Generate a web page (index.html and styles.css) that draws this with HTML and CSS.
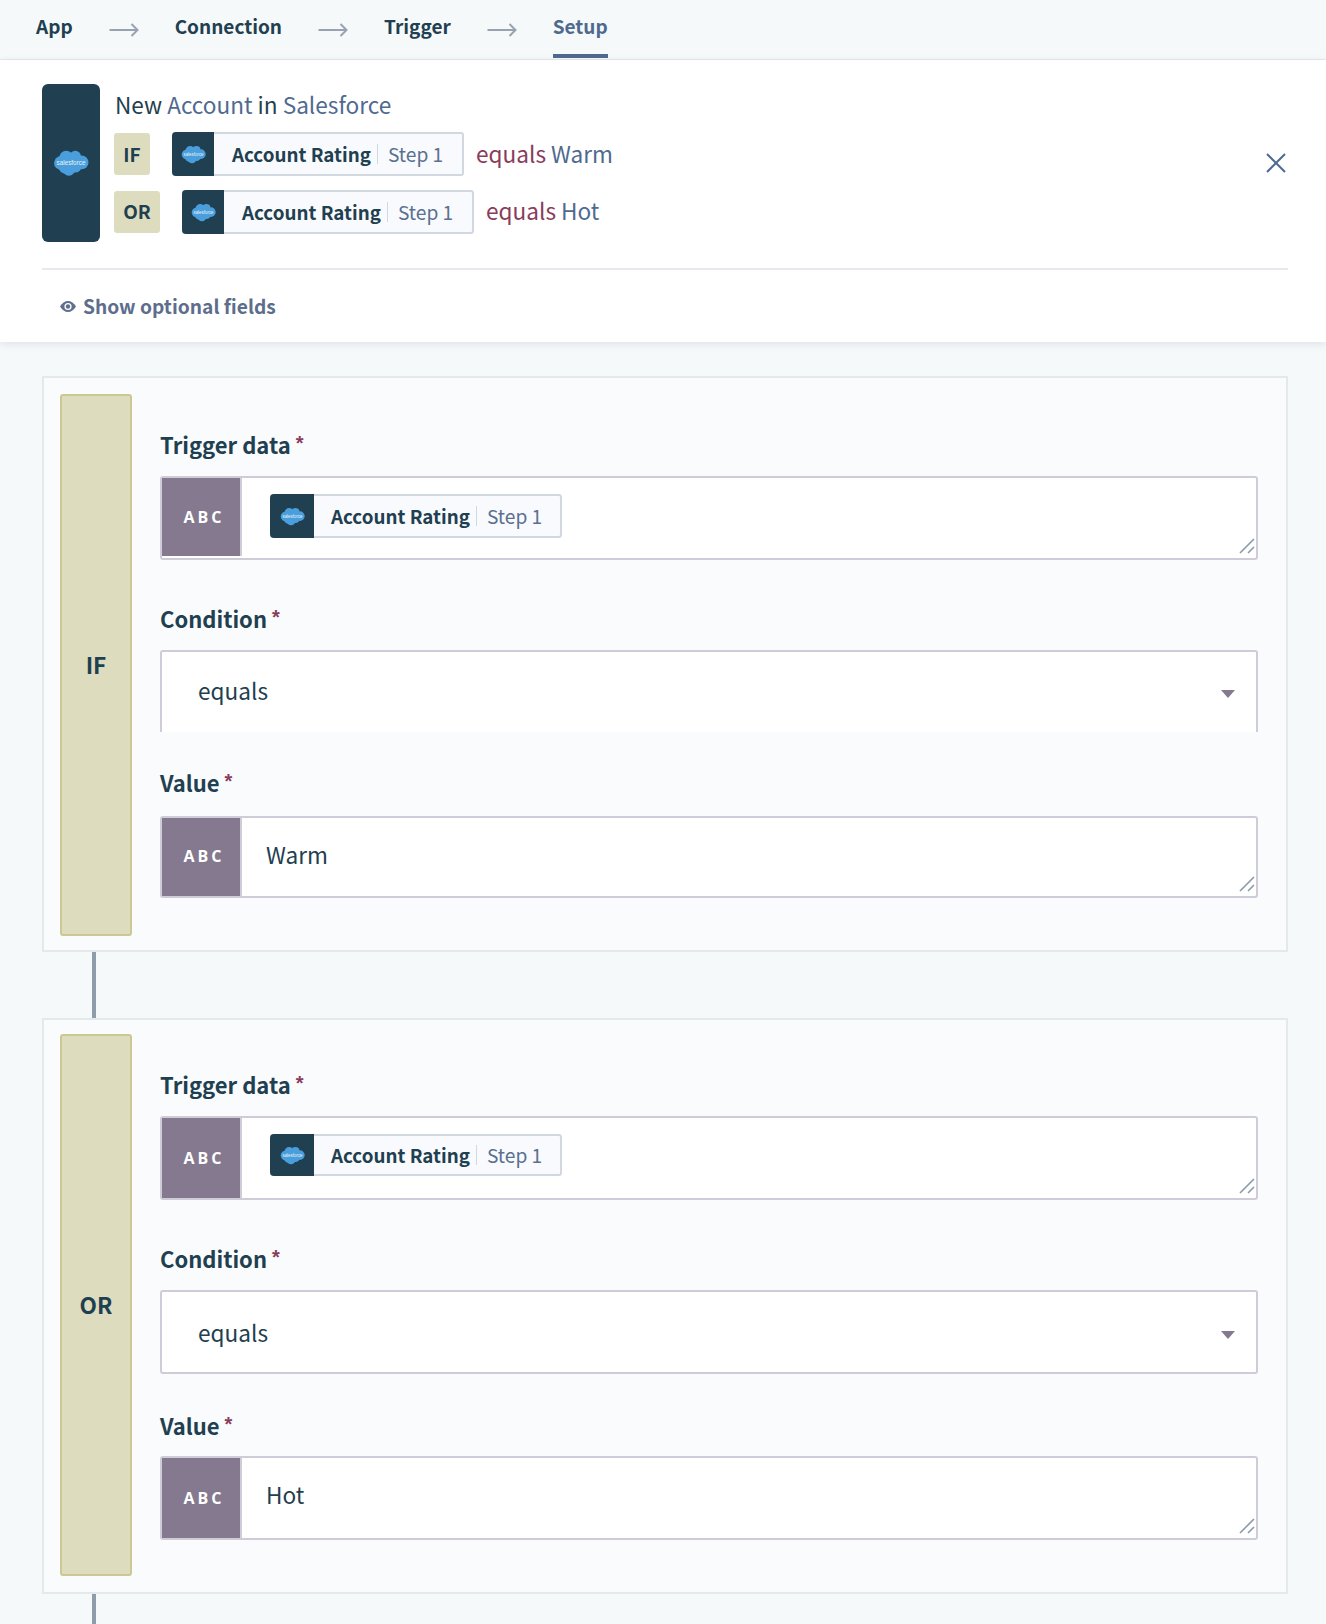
FILE: index.html
```html
<!DOCTYPE html>
<html lang="en">
<head>
<meta charset="utf-8">
<title>Setup</title>
<link rel="stylesheet" href="styles.css">
</head>
<body>
<svg class="defs" width="0" height="0" aria-hidden="true">
  <defs>
    <symbol id="sf" viewBox="0 0 34 24">
      <g fill="#4a9edb">
        <circle cx="7.500" cy="12" r="6.500"/>
        <circle cx="12.500" cy="7" r="6.500"/>
        <circle cx="21" cy="6" r="5.500"/>
        <circle cx="27" cy="11.500" r="6.500"/>
        <circle cx="21" cy="15" r="6"/>
        <circle cx="12" cy="15" r="7"/>
        <circle cx="15" cy="18" r="6"/>
      </g>
      <text x="17" y="14" text-anchor="middle" font-size="6" fill="#e6f3fb" font-family="Liberation Sans, sans-serif">salesforce</text>
    </symbol>
    <symbol id="arrow" viewBox="0 0 29 14">
      <path d="M0 7h28M22 1l6 6-6 6" fill="none" stroke="#97a3b0" stroke-width="2"/>
    </symbol>
    <symbol id="grip" viewBox="0 0 16 16">
      <path d="M1 15L15 1M9 15l6-6" fill="none" stroke="#8b99a8" stroke-width="1.6"/>
    </symbol>
    <symbol id="caret" viewBox="0 0 14 8">
      <path d="M0 0h14L7 8z" fill="#84798f"/>
    </symbol>
  </defs>
</svg>

<nav class="tabs">
  <span class="tab">App</span>
  <svg class="tab-arrow"><use href="#arrow"/></svg>
  <span class="tab">Connection</span>
  <svg class="tab-arrow"><use href="#arrow"/></svg>
  <span class="tab">Trigger</span>
  <svg class="tab-arrow"><use href="#arrow"/></svg>
  <span class="tab tab-active">Setup</span>
</nav>

<section class="summary">
  <div class="summary-main">
    <div class="app-block"><svg class="cloud-lg"><use href="#sf"/></svg></div>
    <div class="summary-info">
      <div class="summary-title">New <span class="link">Account</span> in <span class="link">Salesforce</span></div>
      <div class="rule-row">
        <span class="badge">IF</span>
        <span class="chip">
          <span class="chip-icon"><svg class="cloud-sm"><use href="#sf"/></svg></span>
          <span class="chip-name">Account Rating</span><span class="chip-step">Step 1</span>
        </span>
        <span class="rule-text"><span class="op">equals</span> <span class="link">Warm</span></span>
      </div>
      <div class="rule-row">
        <span class="badge">OR</span>
        <span class="chip">
          <span class="chip-icon"><svg class="cloud-sm"><use href="#sf"/></svg></span>
          <span class="chip-name">Account Rating</span><span class="chip-step">Step 1</span>
        </span>
        <span class="rule-text"><span class="op">equals</span> <span class="link">Hot</span></span>
      </div>
    </div>
    <svg class="close" viewBox="0 0 20 20"><path d="M1 1l18 18M19 1L1 19" fill="none" stroke="#4f6a8f" stroke-width="2"/></svg>
  </div>
  <div class="optional">
    <svg class="eye" viewBox="0 0 16 11"><path d="M0 5.500C2 2 5 0 8 0s6 2 8 5.500C14 9 11 11 8 11S2 9 0 5.500z" fill="#5f6f8d"/><circle cx="8" cy="5.500" r="3.600" fill="#fff"/><circle cx="8" cy="5.500" r="2.200" fill="#5f6f8d"/></svg>
    <span>Show optional fields</span>
  </div>
</section>

<main class="groups">
  <section class="group group-first">
    <div class="group-bar">IF</div>
    <div class="group-form">
      <label class="label">Trigger data <sup class="req">*</sup></label>
      <div class="field field-tall">
        <span class="type type-gap">ABC</span>
        <span class="field-body field-body-chip">
          <span class="chip chip-form">
            <span class="chip-icon"><svg class="cloud-sm"><use href="#sf"/></svg></span>
            <span class="chip-name">Account Rating</span><span class="chip-step">Step 1</span>
          </span>
        </span>
        <svg class="grip"><use href="#grip"/></svg>
      </div>
      <label class="label">Condition <sup class="req">*</sup></label>
      <div class="select select-open">equals<svg class="caret"><use href="#caret"/></svg></div>
      <label class="label label-tight">Value <sup class="req">*</sup></label>
      <div class="field">
        <span class="type">ABC</span>
        <span class="field-body">Warm</span>
        <svg class="grip"><use href="#grip"/></svg>
      </div>
    </div>
  </section>
  <div class="connector"></div>
  <section class="group group-second">
    <div class="group-bar">OR</div>
    <div class="group-form">
      <label class="label">Trigger data <sup class="req">*</sup></label>
      <div class="field field-tall">
        <span class="type">ABC</span>
        <span class="field-body field-body-chip">
          <span class="chip chip-form chip-short">
            <span class="chip-icon"><svg class="cloud-sm"><use href="#sf"/></svg></span>
            <span class="chip-name">Account Rating</span><span class="chip-step">Step 1</span>
          </span>
        </span>
        <svg class="grip"><use href="#grip"/></svg>
      </div>
      <label class="label">Condition <sup class="req">*</sup></label>
      <div class="select select-full">equals<svg class="caret"><use href="#caret"/></svg></div>
      <label class="label label-tight">Value <sup class="req">*</sup></label>
      <div class="field field-end">
        <span class="type">ABC</span>
        <span class="field-body">Hot</span>
        <svg class="grip"><use href="#grip"/></svg>
      </div>
    </div>
  </section>
  <div class="connector connector-end"></div>
</main>
</body>
</html>
```

FILE: styles.css
```css
* { box-sizing: border-box; }
html, body { margin: 0; padding: 0; }
body {
  background: #f6f9fa;
  color: #1f4050;
  font-family: "Noto Sans CJK SC", "Noto Sans", sans-serif;
  font-size: 22.6px;
  line-height: 30px;
}
.defs { position: absolute; }

.tabs {
  display: flex;
  align-items: center;
  height: 60px;
  padding-left: 36px;
  gap: 36px;
  background: #f6f9fa;
  border-bottom: 1px solid #e6eaed;
}
.tab {
  font-size: 19px;
  font-weight: 600;
  height: 58px;
  margin-bottom: 1px;
  line-height: 52px;
}
.tab-active {
  color: #4f6a8f;
  border-bottom: 4px solid #4f6a8f;
}
.tab-arrow { width: 30px; height: 14px; }

.summary {
  background: #fff;
  padding: 24px 38px 0 42px;
  height: 282px;
  box-shadow: 0 2px 8px rgba(40, 60, 80, .12);
  position: relative;
}
.summary-main {
  display: flex;
  align-items: center;
  padding-bottom: 26px;
  border-bottom: 2px solid #e6eaee;
}
.app-block {
  width: 58px;
  height: 158px;
  background: #203f50;
  border-radius: 6px;
  display: flex;
  align-items: center;
  justify-content: center;
  flex: none;
}
.cloud-lg { width: 36px; height: 26px; }
.summary-info {
  margin-left: 14px;
  flex: 1;
  display: flex;
  flex-direction: column;
  gap: 14px;
  align-self: flex-start;
  padding-top: 8px;
}
.summary-title { height: 26px; line-height: 26px; padding-left: 1px; }
.link { color: #4f6a8f; }
.op { color: #8a3c5c; }
.rule-row {
  display: flex;
  align-items: center;
  height: 44px;
}
.badge {
  background: #dddcbe;
  border-radius: 3px;
  width: 36px;
  text-align: center;
  height: 42px;
  line-height: 42px;
  font-size: 19px;
  font-weight: 600;
  margin-right: 22px;
}
.rule-row:last-child .badge { width: 46px; line-height: 40px; }
.rule-row:last-child .rule-text { margin-bottom: 2px; }
.chip {
  display: inline-flex;
  align-items: center;
  height: 44px;
  width: 292px;
  background: #f9fafd;
  border: 2px solid #d2d8e0;
  border-left: 0;
  border-radius: 3px;
  font-size: 19.200px;
}
.chip-icon {
  width: 42px;
  height: 44px;
  flex: none;
  background: #203f50;
  border-radius: 4px 0 0 4px;
  display: flex;
  align-items: center;
  justify-content: center;
}
.chip-form .chip-icon { width: 44px; }
.chip-short { height: 42px; }
.chip-short .chip-icon { height: 42px; }
.cloud-sm { width: 25px; height: 19px; }
.chip-name {
  font-size: 18.800px;
  font-weight: 600;
  margin-left: 18px;
  padding-right: 6px;
  white-space: nowrap;
}
.chip-step {
  color: #5a7090;
  border-left: 1px solid #d2d8e0;
  padding-left: 10px;
  line-height: 20px;
  white-space: nowrap;
}
.chip-form .chip-name { margin-left: 17px; }
.rule-text { margin-left: 12px; }
.close { width: 20px; height: 20px; flex: none; margin-right: 2px; }
.optional {
  display: flex;
  align-items: center;
  height: 70px;
  padding: 2px 0 0 18px;
  gap: 7px;
  color: #5d6d8c;
  font-size: 19.200px;
  font-weight: 600;
}
.eye { width: 16px; height: 11px; }

.groups { padding: 34px 38px 0 42px; }
.group {
  display: flex;
  gap: 28px;
  padding: 0 28px 0 16px;
  background: #fafbfd;
  border: 2px solid #e4e9ec;
}
.group-first { padding-top: 16px; padding-bottom: 14px; }
.group-second { padding-top: 14px; padding-bottom: 16px; }
.group-bar {
  flex: none;
  width: 72px;
  background: #dddcbe;
  border: 2px solid #cbc891;
  border-radius: 3px;
  display: flex;
  align-items: center;
  justify-content: center;
  font-weight: 600;
}
.group-form {
  flex: 1;
  padding: 36px 0 38px;
}
.group-second .group-form { padding-bottom: 36px; }
.label {
  display: block;
  font-size: 22px;
  line-height: 28px;
  font-weight: 600;
  margin-bottom: 18px;
}
.label-tight { margin-bottom: 20px; }
.group-second .label-tight { margin-bottom: 17px; }
.req {
  color: #8a3c5c;
  font-family: "Liberation Sans", sans-serif;
  font-size: 20px;
  line-height: 0;
  vertical-align: 4px;
  font-weight: 700;
}
.field {
  display: flex;
  position: relative;
  height: 82px;
  background: #fff;
  border: 2px solid #d0cbd8;
  border-radius: 3px;
}
.field-tall { height: 84px; margin-bottom: 44px; }
.field-end { height: 84px; }
.type {
  width: 78px;
  margin-right: 2px;
  flex: none;
  background: #84798f;
  color: #fff;
  font-family: "Open Sans", sans-serif;
  font-size: 16px;
  font-weight: 700;
  letter-spacing: 3px;
  padding: 0 0 3px 6px;
  display: flex;
  align-items: center;
  justify-content: center;
  box-shadow: 2px 0 0 #d0cbd8;
}
.field-tall .type, .field-end .type { padding-bottom: 1px; }
.type-gap { margin-bottom: 2px; }
.field-body {
  display: flex;
  align-items: center;
  padding: 0 0 4px 24px;
  flex: 1;
}
.field-end .field-body { padding-bottom: 6px; }
.field-body-chip {
  padding: 16px 0 0 28px;
  align-items: flex-start;
}
.grip {
  position: absolute;
  right: 1px;
  bottom: 4px;
  width: 16px;
  height: 16px;
}
.select {
  display: flex;
  align-items: center;
  justify-content: space-between;
  height: 82px;
  padding: 0 21px 0 36px;
  background: #fff;
  border: 2px solid #d0cbd8;
  border-radius: 3px;
  margin-bottom: 36px;
}
.select-open {
  border-bottom: 0;
  border-radius: 3px 3px 0 0;
  padding-bottom: 2px;
}
.select-full {
  height: 84px;
  padding-top: 2px;
  margin-bottom: 37px;
}
.caret { width: 14px; height: 8px; margin-top: 3px; }
.select-open .caret { margin-top: 5px; }
.connector {
  width: 4px;
  height: 66px;
  margin-left: 50px;
  background: #8f9dab;
}
.connector-end { height: 30px; }
```
